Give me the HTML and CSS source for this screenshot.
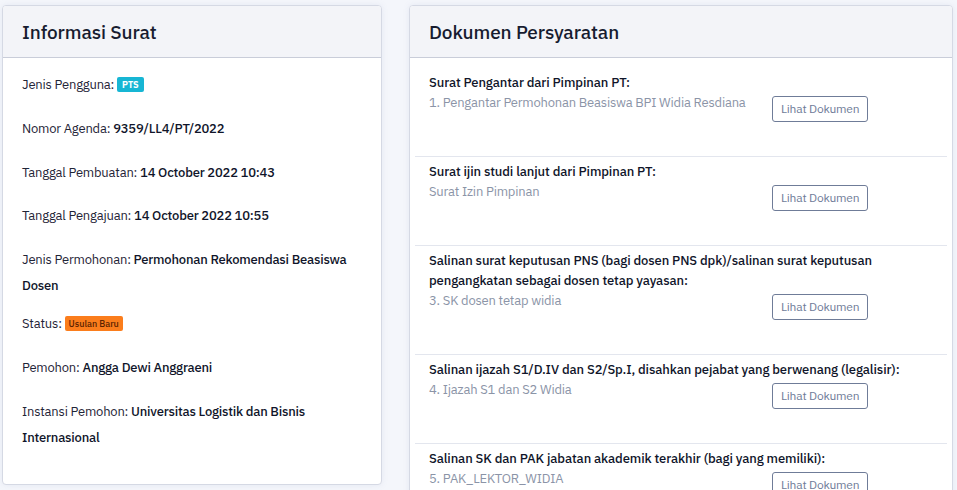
FILE: index.html
```html
<!DOCTYPE html>
<html lang="id">
<head>
<meta charset="utf-8">
<title>Informasi Surat</title>
<link rel="stylesheet" href="styles.css">
</head>
<body>
<div class="layout">
  <section class="card card-info">
    <div class="card-header"><h2>Informasi Surat</h2></div>
    <div class="card-body info-body">
      <p class="row">Jenis Pengguna: <span class="badge badge-pts">PTS</span></p>
      <p class="row">Nomor Agenda: <b>9359/LL4/PT/2022</b></p>
      <p class="row">Tanggal Pembuatan: <b>14 October 2022 10:43</b></p>
      <p class="row">Tanggal Pengajuan: <b>14 October 2022 10:55</b></p>
      <p class="row row-wrap">Jenis Permohonan: <b>Permohonan Rekomendasi Beasiswa Dosen</b></p>
      <p class="row">Status: <span class="badge badge-new">Usulan Baru</span></p>
      <p class="row">Pemohon: <b>Angga Dewi Anggraeni</b></p>
      <p class="row row-wrap">Instansi Pemohon: <b>Universitas Logistik dan Bisnis Internasional</b></p>
    </div>
  </section>

  <section class="card card-docs">
    <div class="card-header"><h2>Dokumen Persyaratan</h2></div>
    <div class="card-body docs-body">
      <div class="doc">
        <div class="doc-title">Surat Pengantar dari Pimpinan PT:</div>
        <div class="doc-row">
          <div class="doc-file">1. Pengantar Permohonan Beasiswa BPI Widia Resdiana</div>
          <a class="btn" href="#">Lihat Dokumen</a>
        </div>
      </div>
      <div class="doc">
        <div class="doc-title">Surat ijin studi lanjut dari Pimpinan PT:</div>
        <div class="doc-row">
          <div class="doc-file">Surat Izin Pimpinan</div>
          <a class="btn" href="#">Lihat Dokumen</a>
        </div>
      </div>
      <div class="doc">
        <div class="doc-title">Salinan surat keputusan PNS (bagi dosen PNS dpk)/salinan surat keputusan pengangkatan sebagai dosen tetap yayasan:</div>
        <div class="doc-row">
          <div class="doc-file">3. SK dosen tetap widia</div>
          <a class="btn" href="#">Lihat Dokumen</a>
        </div>
      </div>
      <div class="doc">
        <div class="doc-title">Salinan ijazah S1/D.IV dan S2/Sp.I, disahkan pejabat yang berwenang (legalisir):</div>
        <div class="doc-row">
          <div class="doc-file">4. Ijazah S1 dan S2 Widia</div>
          <a class="btn" href="#">Lihat Dokumen</a>
        </div>
      </div>
      <div class="doc">
        <div class="doc-title">Salinan SK dan PAK jabatan akademik terakhir (bagi yang memiliki):</div>
        <div class="doc-row">
          <div class="doc-file">5. PAK_LEKTOR_WIDIA</div>
          <a class="btn" href="#">Lihat Dokumen</a>
        </div>
      </div>
    </div>
  </section>
</div>
</body>
</html>
```

FILE: styles.css
```css
* { box-sizing: border-box; }

html, body {
  margin: 0;
  padding: 0;
  background: #f4f6fb;
  font-family: "IBM Plex Sans", Roboto, "Noto Sans", sans-serif;
  color: #1b2033;
  font-size: 13px;
  letter-spacing: -0.2px;
  overflow: hidden;
  height: 490px;
}

.layout {
  display: grid;
  grid-template-columns: 380px 544px;
  column-gap: 27px;
  align-items: start;
  padding: 5px 0 0 2px;
}

.card {
  background: #fff;
  border: 1px solid #d5d9e4;
  border-radius: 4px;
  box-shadow: 0 0 6px rgba(120, 135, 180, 0.12);
  overflow: hidden;
}

.card-info { height: 480px; }
.card-docs { height: 520px; }

.card-header {
  background: #f3f4f8;
  border-bottom: 1px solid #c9cdd9;
  height: 52px;
  padding: 0 19px;
  display: flex;
  align-items: center;
}

.card-header h2 {
  margin: 0;
  font-size: 19px;
  font-weight: 500;
  color: #171c30;
  letter-spacing: -0.1px;
}

.info-body {
  padding: 14px 19px 0;
}

.row {
  margin: 0 0 18px;
  line-height: 26px;
  color: #1f2537;
}

.row:nth-child(3) { margin-bottom: 17px; }

.row-wrap { margin-bottom: 12px; }

.row b {
  font-weight: 500;
  color: #10152a;
}

.badge {
  display: inline-block;
  vertical-align: 1px;
  font-size: 9px;
  line-height: 15px;
  padding: 0 4px;
  border-radius: 2px;
  letter-spacing: 0;
}

.badge-pts {
  background: #17b6d4;
  color: #fff;
  font-weight: 700;
  padding: 0 5px;
}

.badge-new {
  background: #fb7d1c;
  color: #5a2200;
  font-weight: 500;
}

.docs-body {
  padding: 10px 5px 0;
}

.doc {
  padding: 5px 14px 34px;
}

.doc + .doc {
  border-top: 1px solid #e3e6ee;
}

.doc-title {
  font-weight: 500;
  line-height: 20px;
  color: #10152a;
  letter-spacing: -0.1px;
}

.doc-row {
  display: grid;
  grid-template-columns: 343px auto;
  align-items: start;
}

.doc-file {
  color: #8b94a7;
  line-height: 19px;
}

.btn {
  justify-self: start;
  margin-top: 3px;
  display: inline-block;
  height: 26px;
  line-height: 24px;
  padding: 0 8px;
  border: 1px solid #6f7c98;
  border-radius: 3px;
  font-size: 12px;
  color: #6f7c98;
  text-decoration: none;
}
```
